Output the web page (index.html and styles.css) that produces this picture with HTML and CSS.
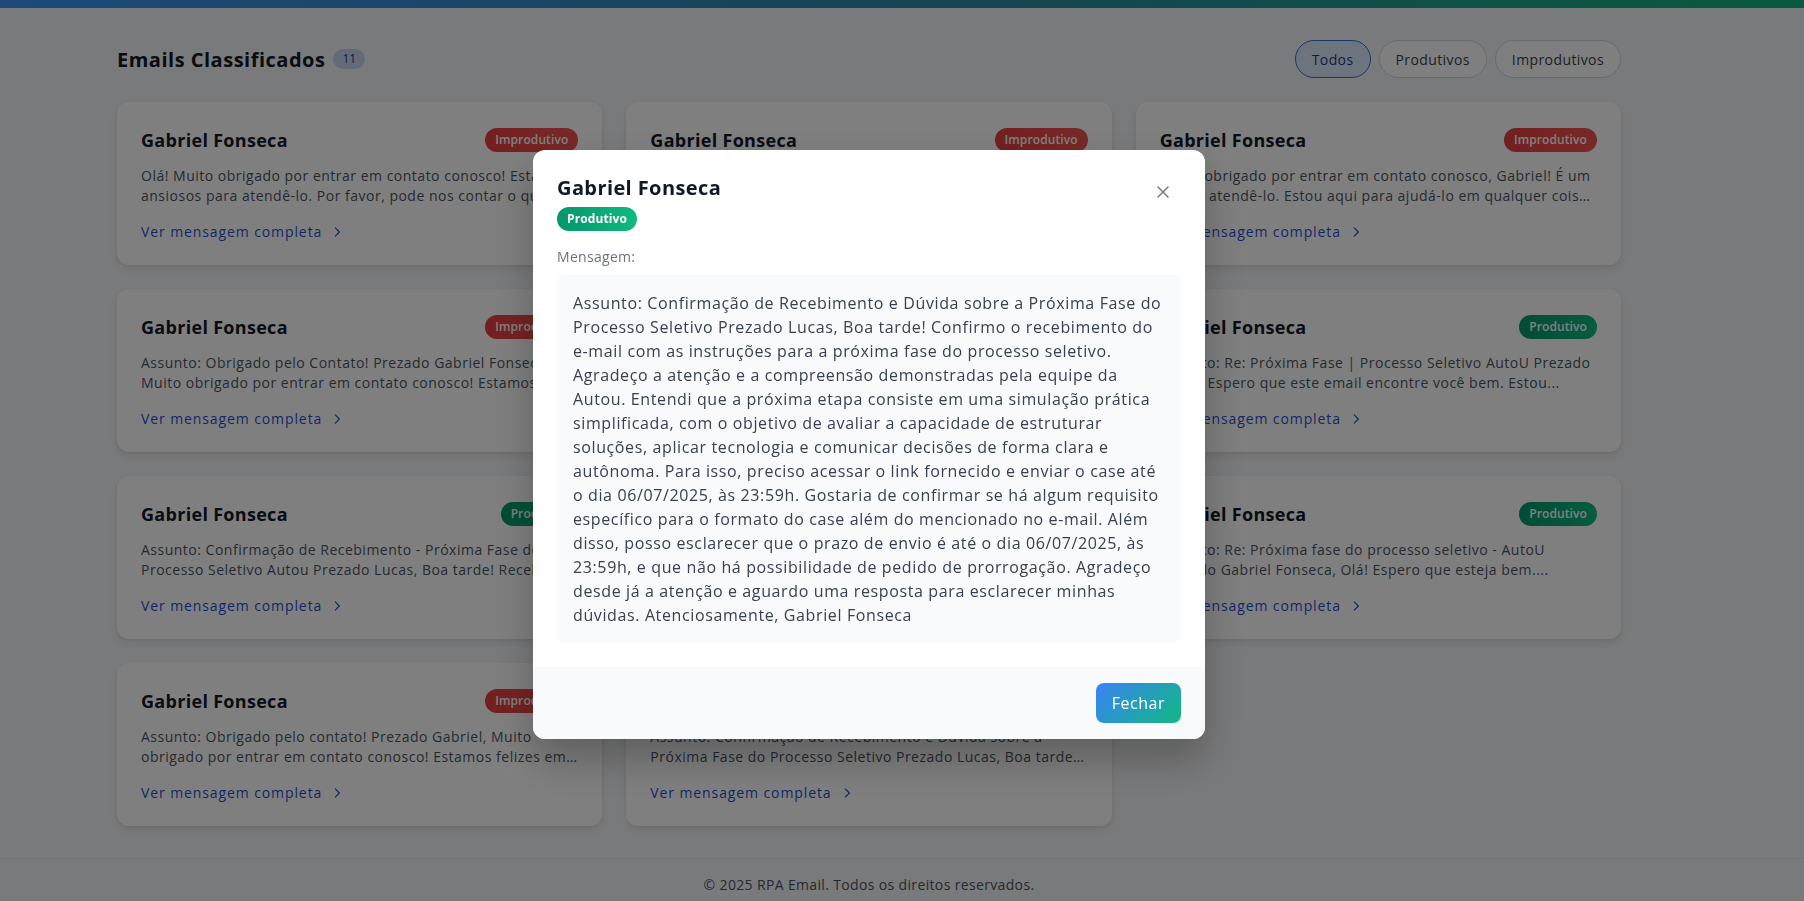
FILE: index.html
```html
<!DOCTYPE html>
<html lang="pt-BR">
<head>
<meta charset="utf-8">
<title>RPA Email</title>
<link rel="stylesheet" href="styles.css">
</head>
<body>
  <div class="topbar"></div>
  <div class="page">
    <main class="container">
      <div class="list-header">
        <h2 class="list-title">Emails Classificados <span class="count">11</span></h2>
        <div class="filters">
          <button class="filter active">Todos</button>
          <button class="filter">Produtivos</button>
          <button class="filter">Improdutivos</button>
        </div>
      </div>

      <div class="grid">
        <article class="card">
          <div class="card-head"><h3 class="sender">Gabriel Fonseca</h3><span class="badge bad">Improdutivo</span></div>
          <p class="preview">Olá! Muito obrigado por entrar em contato conosco! Estamos ansiosos para atendê-lo. Por favor, pode nos contar o que você precisa?</p>
          <a class="more" href="#">Ver mensagem completa <svg viewBox="0 0 24 24" class="chev"><path d="M9 5l7 7-7 7"/></svg></a>
        </article>
        <article class="card">
          <div class="card-head"><h3 class="sender">Gabriel Fonseca</h3><span class="badge bad">Improdutivo</span></div>
          <p class="preview">Assunto: Obrigado! Prezado Gabriel, Muito obrigado pela sua mensagem! Ficamos felizes em saber do seu interesse...</p>
          <a class="more" href="#">Ver mensagem completa <svg viewBox="0 0 24 24" class="chev"><path d="M9 5l7 7-7 7"/></svg></a>
        </article>
        <article class="card">
          <div class="card-head"><h3 class="sender">Gabriel Fonseca</h3><span class="badge bad">Improdutivo</span></div>
          <p class="preview">Muito obrigado por entrar em contato conosco, Gabriel! É um prazer atendê-lo. Estou aqui para ajudá-lo em qualquer coisa que precisar.</p>
          <a class="more" href="#">Ver mensagem completa <svg viewBox="0 0 24 24" class="chev"><path d="M9 5l7 7-7 7"/></svg></a>
        </article>

        <article class="card">
          <div class="card-head"><h3 class="sender">Gabriel Fonseca</h3><span class="badge bad">Improdutivo</span></div>
          <p class="preview">Assunto: Obrigado pelo Contato! Prezado Gabriel Fonseca, Muito obrigado por entrar em contato conosco! Estamos felizes em ajudar.</p>
          <a class="more" href="#">Ver mensagem completa <svg viewBox="0 0 24 24" class="chev"><path d="M9 5l7 7-7 7"/></svg></a>
        </article>
        <article class="card">
          <div class="card-head"><h3 class="sender">Gabriel Fonseca</h3><span class="badge good">Produtivo</span></div>
          <p class="preview">Assunto: Próxima Fase do Processo Seletivo Prezado Gabriel, Boa tarde! Gostaria de confirmar o recebimento das instruções.</p>
          <a class="more" href="#">Ver mensagem completa <svg viewBox="0 0 24 24" class="chev"><path d="M9 5l7 7-7 7"/></svg></a>
        </article>
        <article class="card">
          <div class="card-head"><h3 class="sender">Gabriel Fonseca</h3><span class="badge good">Produtivo</span></div>
          <p class="preview">Assunto: Re: Próxima Fase | Processo Seletivo AutoU Prezado Lucas, Espero que este email encontre você bem. Estou...</p>
          <a class="more" href="#">Ver mensagem completa <svg viewBox="0 0 24 24" class="chev"><path d="M9 5l7 7-7 7"/></svg></a>
        </article>

        <article class="card">
          <div class="card-head"><h3 class="sender">Gabriel Fonseca</h3><span class="badge good">Produtivo</span></div>
          <p class="preview">Assunto: Confirmação de Recebimento - Próxima Fase do Processo Seletivo Autou Prezado Lucas, Boa tarde! Recebi as instruções.</p>
          <a class="more" href="#">Ver mensagem completa <svg viewBox="0 0 24 24" class="chev"><path d="M9 5l7 7-7 7"/></svg></a>
        </article>
        <article class="card">
          <div class="card-head"><h3 class="sender">Gabriel Fonseca</h3><span class="badge good">Produtivo</span></div>
          <p class="preview">Assunto: Dúvida sobre o Case Prezado Lucas, Boa tarde! Gostaria de esclarecer uma dúvida sobre o prazo de envio.</p>
          <a class="more" href="#">Ver mensagem completa <svg viewBox="0 0 24 24" class="chev"><path d="M9 5l7 7-7 7"/></svg></a>
        </article>
        <article class="card">
          <div class="card-head"><h3 class="sender">Gabriel Fonseca</h3><span class="badge good">Produtivo</span></div>
          <p class="preview">Assunto: Re: Próxima fase do processo seletivo - AutoU Prezado Gabriel Fonseca, Olá! Espero que esteja bem....</p>
          <a class="more" href="#">Ver mensagem completa <svg viewBox="0 0 24 24" class="chev"><path d="M9 5l7 7-7 7"/></svg></a>
        </article>

        <article class="card">
          <div class="card-head"><h3 class="sender">Gabriel Fonseca</h3><span class="badge bad">Improdutivo</span></div>
          <p class="preview">Assunto: Obrigado pelo contato! Prezado Gabriel, Muito obrigado por entrar em contato conosco! Estamos felizes em poder ajudar você.</p>
          <a class="more" href="#">Ver mensagem completa <svg viewBox="0 0 24 24" class="chev"><path d="M9 5l7 7-7 7"/></svg></a>
        </article>
        <article class="card">
          <div class="card-head"><h3 class="sender">Gabriel Fonseca</h3><span class="badge good">Produtivo</span></div>
          <p class="preview">Assunto: Confirmação de Recebimento e Dúvida sobre a Próxima Fase do Processo Seletivo Prezado Lucas, Boa tarde! Confirmo o recebimento.</p>
          <a class="more" href="#">Ver mensagem completa <svg viewBox="0 0 24 24" class="chev"><path d="M9 5l7 7-7 7"/></svg></a>
        </article>
      </div>
    </main>
  </div>
  <footer class="site-footer">© 2025 RPA Email. Todos os direitos reservados.</footer>

  <div class="overlay">
    <div class="modal" role="dialog">
      <div class="modal-head">
        <div>
          <h3 class="modal-title">Gabriel Fonseca</h3>
          <span class="badge good solid">Produtivo</span>
        </div>
        <button class="close" aria-label="Fechar"><svg viewBox="0 0 24 24"><path d="M6 6l12 12M18 6L6 18"/></svg></button>
      </div>
      <div class="modal-body">
        <p class="label">Mensagem:</p>
        <div class="message">Assunto: Confirmação de Recebimento e Dúvida sobre a Próxima Fase do Processo Seletivo Prezado Lucas, Boa tarde! Confirmo o recebimento do e-mail com as instruções para a próxima fase do processo seletivo. Agradeço a atenção e a compreensão demonstradas pela equipe da Autou. Entendi que a próxima etapa consiste em uma simulação prática simplificada, com o objetivo de avaliar a capacidade de estruturar soluções, aplicar tecnologia e comunicar decisões de forma clara e autônoma. Para isso, preciso acessar o link fornecido e enviar o case até o dia 06/07/2025, às 23:59h. Gostaria de confirmar se há algum requisito específico para o formato do case além do mencionado no e-mail. Além disso, posso esclarecer que o prazo de envio é até o dia 06/07/2025, às 23:59h, e que não há possibilidade de pedido de prorrogação. Agradeço desde já a atenção e aguardo uma resposta para esclarecer minhas dúvidas. Atenciosamente, Gabriel Fonseca</div>
      </div>
      <div class="modal-foot">
        <button class="btn-close">Fechar</button>
      </div>
    </div>
  </div>
</body>
</html>
```
FILE: styles.css
```css
* { box-sizing: border-box; }
html, body { margin: 0; padding: 0; }
body {
  font-family: "Open Sans", "Noto Sans", sans-serif;
  background: #f3f4f6;
  color: #111827;
  overflow: hidden;
  height: 901px;
}
.topbar {
  height: 8px;
  background: linear-gradient(90deg, #3c94f6 0%, #2f86a8 50%, #14b37e 100%);
}
.page { width: 1738px; }
.container {
  max-width: 1504px;
  margin: 0 auto;
  padding: 32px 0 32px;
}
.list-header {
  display: flex;
  justify-content: space-between;
  align-items: center;
  height: 38px;
  margin-bottom: 24px;
}
.list-title {
  margin: 0;
  font-size: 20px;
  font-weight: 700;
  color: #111827;
  display: flex;
  align-items: center;
  gap: 8px;
  letter-spacing: 0.5px;
}
.count {
  font-size: 12px;
  font-weight: 500;
  letter-spacing: 0;
  background: #c7d7f0;
  color: #1e3a8a;
  border-radius: 999px;
  padding: 1px 9px;
  line-height: 18px;
}
.filters { display: flex; gap: 8px; }
.filter {
  font-family: inherit;
  font-size: 14px;
  font-weight: 500;
  letter-spacing: 0.4px;
  height: 38px;
  padding: 0 16px;
  border-radius: 999px;
  border: 1px solid #d1d5db;
  background: #ffffff;
  color: #374151;
}
.filter.active {
  background: #dbe8fb;
  border-color: #3b6fd4;
  color: #1e3a8a;
}
.grid {
  display: grid;
  grid-template-columns: repeat(3, 1fr);
  gap: 24px;
}
.card {
  background: #fff;
  border-radius: 12px;
  box-shadow: 0 4px 8px rgba(0,0,0,0.08), 0 1px 3px rgba(0,0,0,0.06);
  padding: 24px;
  height: 163px;
}
.card-head {
  display: flex;
  justify-content: space-between;
  align-items: center;
  height: 28px;
}
.sender {
  margin: 0;
  font-size: 18px;
  font-weight: 700;
  letter-spacing: 0.3px;
  color: #111827;
}
.badge {
  display: inline-block;
  font-size: 12px;
  font-weight: 600;
  line-height: 16px;
  padding: 4px 10px;
  border-radius: 999px;
  color: #fff;
  letter-spacing: 0.1px;
}
.badge.bad { background: linear-gradient(90deg, #e53e3e, #ef5350); }
.badge.good { background: linear-gradient(90deg, #059669, #10b981); }
.preview {
  margin: 12px 0 14px;
  font-size: 14px;
  line-height: 20px;
  letter-spacing: 0.5px;
  color: #4b5563;
  height: 40px;
  display: -webkit-box;
  -webkit-line-clamp: 2;
  -webkit-box-orient: vertical;
  overflow: hidden;
}
.more {
  display: inline-flex;
  align-items: center;
  gap: 8px;
  font-size: 14px;
  line-height: 20px;
  font-weight: 500;
  letter-spacing: 0.9px;
  color: #1f4fd0;
  text-decoration: none;
}
.chev { width: 14px; height: 14px; fill: none; stroke: #1f4fd0; stroke-width: 2; stroke-linecap: round; stroke-linejoin: round; }
.site-footer {
  border-top: 1px solid #e5e7eb;
  padding: 16px 66px 16px 0;
  text-align: center;
  font-size: 14px;
  line-height: 20px;
  letter-spacing: 0.35px;
  color: #4b5563;
}
.overlay {
  position: fixed;
  inset: 0;
  background: rgba(0,0,0,0.5);
  display: flex;
  justify-content: center;
  align-items: flex-start;
  padding: 150px 66px 0 0;
}
.modal {
  width: 672px;
  background: #fff;
  border-radius: 12px;
  overflow: hidden;
  box-shadow: 0 20px 40px rgba(0,0,0,0.25);
}
.modal-head {
  display: flex;
  justify-content: space-between;
  align-items: flex-start;
  padding: 24px 24px 16px;
}
.modal-title {
  margin: 0 0 4px;
  font-size: 20px;
  line-height: 28px;
  font-weight: 700;
  letter-spacing: 0.4px;
  color: #111827;
}
.badge.solid { font-weight: 700; }
.close {
  width: 36px;
  height: 36px;
  border: 0;
  background: transparent;
  padding: 8px;
  display: flex;
  align-items: center;
  justify-content: center;
}
.close svg { width: 20px; height: 20px; fill: none; stroke: #6b7280; stroke-width: 1.6; stroke-linecap: round; }
.modal-body { padding: 0 24px 24px; }
.label {
  margin: 0 0 8px;
  font-size: 14px;
  line-height: 20px;
  font-weight: 500;
  letter-spacing: 0.3px;
  color: #6b7280;
}
.message {
  background: #f9fafb;
  border-radius: 8px;
  padding: 16px;
  font-size: 16px;
  line-height: 24px;
  letter-spacing: 0.62px;
  color: #374151;
}
.modal-foot {
  background: #f9fafb;
  padding: 16px 24px;
  display: flex;
  justify-content: flex-end;
}
.btn-close {
  font-family: inherit;
  font-size: 16px;
  font-weight: 500;
  letter-spacing: 0.5px;
  color: #fff;
  height: 40px;
  padding: 0 16px;
  border: 0;
  border-radius: 8px;
  background: linear-gradient(135deg, #3b82f6, #10b981);
}
```
